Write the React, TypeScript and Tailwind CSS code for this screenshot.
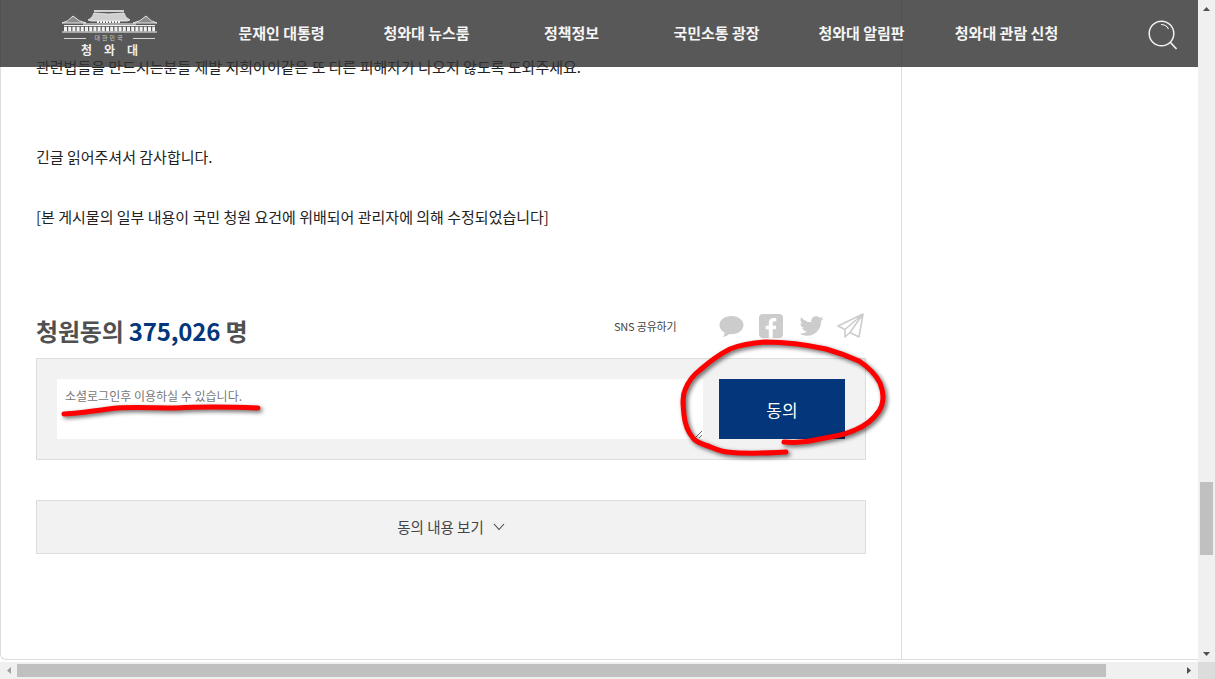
import React from "react";
import { FaTwitter, FaFacebookF } from "react-icons/fa";

const FONT = "font-['Noto_Sans_CJK_KR','Noto_Sans',sans-serif]";
const nav = ["문재인 대통령", "청와대 뉴스룸", "정책정보", "국민소통 광장", "청와대 알림판", "청와대 관람 신청"];

function Logo() {
  return (
    <div className="flex flex-col items-center w-[97px]">
      <svg width="97" height="23" viewBox="0 0 97 23" fill="none" stroke="#f2f2f2">
        <path d="M27 10 Q32 8 33 3 Q47 5 63 3 Q64 8 69 10 L66 11 H30 Z" fill="#cfcfcf" stroke="#f5f5f5" strokeWidth="0.8" />
        <path d="M33 1 H63" strokeWidth="1.6" />
        <path d="M36 12 H60" strokeWidth="2" strokeDasharray="2 1" />
        <path d="M1 13 Q7 12 12 6 Q18 12 25 13 Z" fill="#8c8c8c" stroke="#f2f2f2" strokeWidth="0.9" />
        <path d="M72 13 Q79 12 85 6 Q90 12 96 13 Z" fill="#8c8c8c" stroke="#f2f2f2" strokeWidth="0.9" />
        <path d="M22 14 H75" strokeWidth="1.2" />
        <path d="M3 15.500 H94" strokeWidth="1" />
        <path d="M3 19 H94" strokeWidth="4.500" strokeDasharray="3 1.200" />
        <path d="M1 22 H96" strokeWidth="1" />
      </svg>
      <div className="flex items-center gap-[8px] h-[10px]">
        <span className="w-[22px] h-px bg-[#d5d5d5]" />
        <span className="text-[6px] leading-none tracking-[2px] text-[#cccccc]">대한민국</span>
        <span className="w-[22px] h-px bg-[#d5d5d5]" />
      </div>
      <div className="text-[12px] leading-[14px] font-bold text-[#eeeeee] tracking-[12px] pl-[12px]">청와대</div>
    </div>
  );
}

function Scribbles() {
  return (
    <svg
      className="absolute left-0 top-0 pointer-events-none drop-shadow-[2px_2px_2px_rgba(0,0,0,0.6)]"
      width="1198"
      height="662"
      fill="none"
      stroke="#ff0000"
      strokeWidth="5"
      strokeLinecap="round"
      strokeLinejoin="round"
    >
      <path d="M786 452 C770 453 745 454 727 452 C718 451 712 447 705 445 C700 443 696 442 693 438 C688 432 685 425 684 415 C683 405 682 397 685 390 C688 382 692 376 700 370 C708 363 718 355 730 349 C740 345 750 343 765 342 C785 342 808 345 826 349 C840 353 850 357 859 361 C868 367 875 373 880 383 C884 393 884 403 879 411 C873 420 865 426 855 430 C845 435 835 436 820 439 C808 442 795 443 784 442" />
      <path d="M64 414 C80 413 100 410 117 408 C135 407 155 408 177 408 C205 406 235 407 258 408" />
    </svg>
  );
}

export default function App() {
  return (
    <div className={`w-[1215px] h-[679px] overflow-hidden relative bg-white flex flex-col ${FONT}`}>
      <div className="flex h-[662px]">
        <div className="w-[1198px] h-[660px] border-l border-b border-[#dddddd] rounded-bl-[6px] flex">
          <main className="w-[901px] h-full border-r border-[#dddddd] pl-[35px] pr-[35px] text-[15px] leading-[30px] text-[#222222]">
            <p className="mt-[52px] whitespace-nowrap">관련법들을 만드시는분들 제발 저희아이같은 또 다른 피해자가 나오지 않도록 도와주세요.</p>
            <p className="mt-[60px]">긴글 읽어주셔서 감사합니다.</p>
            <p className="mt-[30px] whitespace-nowrap">[본 게시물의 일부 내용이 국민 청원 요건에 위배되어 관리자에 의해 수정되었습니다]</p>

            <div className="mt-[74px] h-[50px] flex items-center">
              <h2 className="w-[578px] text-[24px] leading-[50px] font-bold text-[#505050] tracking-[-0.2px] whitespace-nowrap">
                청원동의 <span className="text-[#03367a]">375,026</span> 명
              </h2>
              <span className="-mt-[10px] text-[11px] leading-none text-[#444444] tracking-[-0.2px] whitespace-nowrap">SNS 공유하기</span>
              <div className="ml-auto mr-[2px] -mt-[10px] flex items-center text-[#cccccc]">
                <svg width="25" height="23" viewBox="0 0 26 24" fill="#cccccc" preserveAspectRatio="none">
                  <path d="M13 1C6 1 .5 5 .5 10.500c0 3.500 2.200 6.400 5.500 8.100-.3 1.700-1 3.200-2 4.400 2.500-.3 5-1.500 6.700-3.100.8.100 1.500.2 2.300.2 7 0 12.500-4.300 12.500-9.600S20 1 13 1z" />
                </svg>
                <div className="ml-[15px] w-[24px] h-[24px] rounded-[4px] bg-[#cccccc] flex items-end justify-center text-white">
                  <FaFacebookF className="w-[18px] h-[20px]" />
                </div>
                <FaTwitter className="ml-[15px] w-[27px] h-[24px]" />
                <svg className="ml-[12px]" width="27" height="26" viewBox="0 0 27 26" fill="none" stroke="#cccccc" strokeWidth="1.6" strokeLinejoin="round">
                  <path d="M26 1 1 13l7 3.500L26 1 13 19.500l9 4.500L26 1zM8 16.500V24l5-4.500" />
                </svg>
              </div>
            </div>

            <div className="mt-[2px] w-[830px] h-[102px] border border-[#dddddd] bg-[#f2f2f2] p-[20px] flex gap-[16px]">
              <textarea
                readOnly
                placeholder="소셜로그인후 이용하실 수 있습니다."
                className="w-[646px] h-[60px] bg-white px-[8px] py-[8px] text-[12px] leading-[18px] outline-none placeholder:text-[#777777]"
              />
              <button className="w-[126px] h-[60px] pt-[2px] bg-[#03367a] text-white text-[17px]">동의</button>
            </div>

            <button className="mt-[40px] w-[830px] h-[54px] border border-[#dddddd] bg-[#f2f2f2] flex items-center justify-center gap-[9px] text-[14.500px] text-[#444444]">
              동의 내용 보기
              <svg width="12" height="8" viewBox="0 0 12 8" fill="none" stroke="#444444" strokeWidth="1.1">
                <path d="M1 1l5 5.500L11 1" />
              </svg>
            </button>
          </main>
        </div>
        <div className="w-[17px] h-full bg-[#f0f0f0] flex flex-col items-center">
          <svg className="mt-[6px]" width="9" height="6" viewBox="0 0 9 6" fill="#505050"><path d="M4.500 1 8 5H1z" /></svg>
          <div className="mt-[470px] w-[13px] h-[73px] bg-[#c0c0c0]" />
          <svg className="mt-auto mb-[5px]" width="9" height="6" viewBox="0 0 9 6" fill="#505050"><path d="M1 1h7L4.500 5z" /></svg>
        </div>
      </div>

      <div className="flex h-[17px] bg-[#f0f0f0]">
        <div className="w-[17px] flex items-center justify-center">
          <svg width="6" height="9" viewBox="0 0 6 9" fill="#a0a0a0"><path d="M5 1v7L1 4.500z" /></svg>
        </div>
        <div className="w-[1089px] h-[13px] mt-[2px] bg-[#c0c0c0]" />
        <div className="flex-1 flex items-center justify-end pr-[6px]">
          <svg width="6" height="9" viewBox="0 0 6 9" fill="#505050"><path d="M1 1l4 3.500L1 8z" /></svg>
        </div>
        <div className="w-[17px] bg-[#dcdcdc]" />
      </div>

      <header className="absolute left-0 top-0 w-[1198px] h-[67px] bg-[#333333]/82 flex items-start">
        <div className="ml-[61px] mt-[10px]"><Logo /></div>
        <nav className="ml-[51px] grid grid-cols-[repeat(6,145px)] h-[67px]">
          {nav.map((n) => (
            <a key={n} className="text-center text-[15px] leading-[66px] font-bold text-[#f5f5f5] whitespace-nowrap">{n}</a>
          ))}
        </nav>
        <svg className="ml-auto mr-[20px] mt-[20px]" width="30" height="30" viewBox="0 0 30 30" fill="none" stroke="#f2f2f2">
          <circle cx="13.500" cy="13.500" r="12.300" strokeWidth="1.500" />
          <path d="M22.500 22.500l6 6.500" strokeWidth="1.700" />
          <path d="M13 4.500c3.500 0 6 1.500 7.500 4.500" strokeWidth="1.100" />
        </svg>
      </header>

      <Scribbles />
    </div>
  );
}
